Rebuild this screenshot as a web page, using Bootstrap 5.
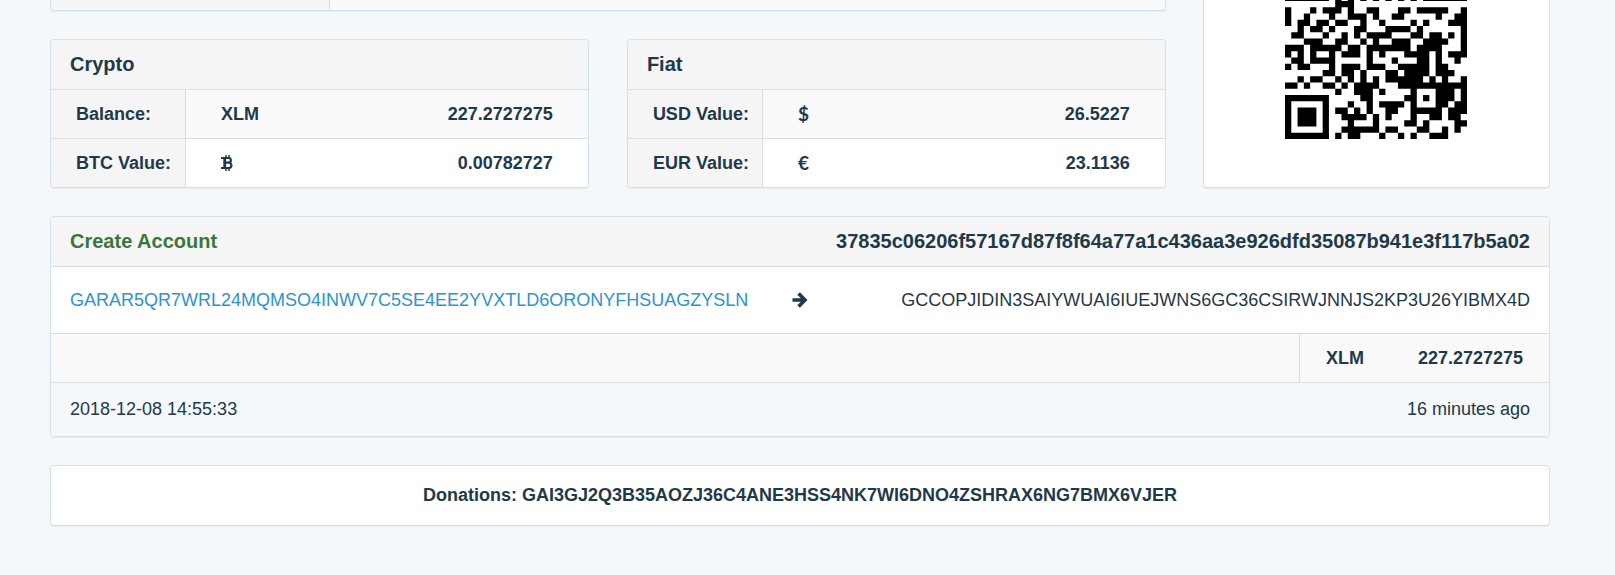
<!DOCTYPE html>
<html lang="en">
<head>
<meta charset="utf-8">
<meta name="viewport" content="width=device-width, initial-scale=1">
<title>Stellar account</title>
<link rel="stylesheet" href="https://cdn.jsdelivr.net/npm/bootstrap@5.3.0/dist/css/bootstrap.min.css">
<style>
  body { background: #f4f8fb; color: #1f394b; font-family: "Liberation Sans", Arial, sans-serif; font-size: 18px; line-height: 24px; }
  .page { padding: 0 65px 0 50px; }
  .row-outer { --bs-gutter-x: 37px; }
  .row-inner { --bs-gutter-x: 38px; }
  .panel { background: #fff; border: 1px solid #d3e0e9; border-radius: 4px; box-shadow: 0 1px 1px rgba(0,0,0,.05); overflow: hidden; margin-bottom: 28px; }
  .panel-cut { border-top: 0; border-top-left-radius: 0; border-top-right-radius: 0; }
  .panel-head { background: #f5f5f5; border-bottom: 1px solid #d3e0e9; padding: 12px 19px 13px; }
  .panel-head h2 { font-size: 20px; line-height: 24px; font-weight: 700; margin: 0; }
  .panel-head .kind { color: #3c763d; }
  .panel-foot { background: #f4f8fb; border-top: 1px solid #d3e0e9; padding: 14px 19px 15px; }
  .grid-table { width: 100%; border-collapse: separate; border-spacing: 0; font-weight: 700; }
  .grid-table th, .grid-table td { padding: 12px 35px; background: #f9f9f9; vertical-align: middle; }
  .grid-table th { background: #f5f5f5; border-right: 1px solid #ddd; padding: 12px 0 12px 25px; width: 135px; }
  .grid-table tr + tr > * { border-top: 1px solid #ddd; }
  .grid-table tr + tr td { background: #fff; }
  .cut-row { height: 10px; }
  .cut-label { width: 279px; background: #f5f5f5; border-right: 1px solid #ddd; }
  .cut-value { background: #f9f9f9; }
  .qr-box { padding-bottom: 48px; }
  .qr-code { width: 182px; height: 139px; }
  .route { display: grid; grid-template-columns: 1fr auto 1fr; padding: 21px 19px; }
  .route a { color: #2e93d1; text-decoration: none; }
  .grid-table.amounts td { border-top: 1px solid #ddd; }
  .grid-table.amounts .unit { border-left: 1px solid #ddd; width: 96px; padding: 12px 0 12px 26px; }
  .grid-table.amounts .sum { width: 154px; padding: 12px 26px 12px 0; }
  .grid-table .money { font-family: Lato, "Open Sans", sans-serif; font-size: 19px; font-weight: 700; }
  .donate { padding: 17px 19px 18px; }
</style>
</head>
<body>
<main class="page">
  <div class="row row-outer">
    <div class="col-9">
      <div class="panel panel-cut">
        <div class="d-flex cut-row"><div class="cut-label"></div><div class="cut-value flex-grow-1"></div></div>
      </div>
      <div class="row row-inner">
        <div class="col-6">
          <section class="panel">
            <div class="panel-head"><h2>Crypto</h2></div>
            <table class="grid-table">
              <tr><th scope="row">Balance:</th><td>XLM</td><td class="text-end">227.2727275</td></tr>
              <tr><th scope="row">BTC Value:</th><td><svg class="d-block" width="13" height="18" viewBox="0 0 13 18" role="img" aria-label="Bitcoin"><g fill="none" stroke="#1f394b"><path stroke-width="2.200" d="M0 4h7.500a2.300 2.300 0 0 1 0 4.700H4M0 14h7.800a2.600 2.600 0 0 0 0-5.300"/><path stroke-width="2.800" d="M3.700 4v10"/><path stroke-width="1.500" d="M5 1v3M8 1v3M5 14v3M8 14v3"/></g></svg></td><td class="text-end">0.00782727</td></tr>
            </table>
          </section>
        </div>
        <div class="col-6">
          <section class="panel">
            <div class="panel-head"><h2>Fiat</h2></div>
            <table class="grid-table">
              <tr><th scope="row">USD Value:</th><td class="money">$</td><td class="text-end">26.5227</td></tr>
              <tr><th scope="row">EUR Value:</th><td class="money">€</td><td class="text-end">23.1136</td></tr>
            </table>
          </section>
        </div>
      </div>
    </div>
    <div class="col-3">
      <div class="panel panel-cut qr-box">
        <svg class="qr-code d-block mx-auto" viewBox="0 6.85 29 22.15" role="img" aria-label="Account QR code"><path id="qr" fill="#000"/></svg>
      </div>
    </div>
  </div>

  <section class="panel">
    <div class="panel-head d-flex justify-content-between">
      <h2 class="kind">Create Account</h2>
      <h2>37835c06206f57167d87f8f64a77a1c436aa3e926dfd35087b941e3f117b5a02</h2>
    </div>
    <div class="route align-items-center">
      <div><a href="#">GARAR5QR7WRL24MQMSO4INWV7C5SE4EE2YVXTLD6ORONYFHSUAGZYSLN</a></div>
      <svg width="16" height="16" viewBox="0 0 16 16" aria-hidden="true"><path fill="none" stroke="#1f394b" stroke-width="3.600" d="M.5 8H13M6.600 1.600 13 8 6.600 14.400"/></svg>
      <div class="text-end">GCCOPJIDIN3SAIYWUAI6IUEJWNS6GC36CSIRWJNNJS2KP3U26YIBMX4D</div>
    </div>
    <table class="grid-table amounts">
      <tr><td></td><td class="unit">XLM</td><td class="sum text-end">227.2727275</td></tr>
    </table>
    <div class="panel-foot d-flex justify-content-between"><span>2018-12-08 14:55:33</span><span>16 minutes ago</span></div>
  </section>

  <footer class="panel donate text-center fw-bold">Donations: GAI3GJ2Q3B35AOZJ36C4ANE3HSS4NK7WI6DNO4ZSHRAX6NG7BMX6VJER</footer>
</main>
<script src="https://cdn.jsdelivr.net/npm/bootstrap@5.3.0/dist/js/bootstrap.bundle.min.js"></script>
<script>
  // Dark modules of the code, one string per row, starting at row 6.
  const rows = [
    '#######.#.#.#.#.#.#.#.#######',
    '........###..................',
    '#...#.###.#..##...##.#####..#',
    '#..#...#..###.#..##.....#..##',
    '#.##.##.##..#..#....#.#...###',
    '..#.##.#...##...####.#......#',
    '.##...#..#.#.####...##.##.#.#',
    '...###..##..#.#..###..####..#',
    '###.#####.##.#######.####...#',
    '#.#.#..#.###.#.#...####.#.###',
    '.##.####.....#...#...##.#..#.',
    '#.##...#.###.###..#####.##...',
    '......##.##.#...##.####.###..',
    '..#.##..#.#.#.#.######.#.#..#',
    '##.#..##.#.####...###########',
    '........#..###.#....#...###.#',
    '#######.....##.....##.#.###.#',
    '#.....#...#..#.####.#...##.##',
    '#.###.#.##.#.#..##..#####.###',
    '#.###.#..####.#.#...#..##.##.',
    '#.###.#...#...#....##.#....##',
    '#.....#..######.##...##..#.#.',
    '#######.#.##...#..#.#..###...'
  ];
  let d = '';
  rows.forEach((row, y) => {
    for (const run of row.matchAll(/#+/g)) d += `M${run.index} ${y + 6}h${run[0].length}v1h-${run[0].length}z`;
  });
  document.getElementById('qr').setAttribute('d', d);
</script>
</body>
</html>
